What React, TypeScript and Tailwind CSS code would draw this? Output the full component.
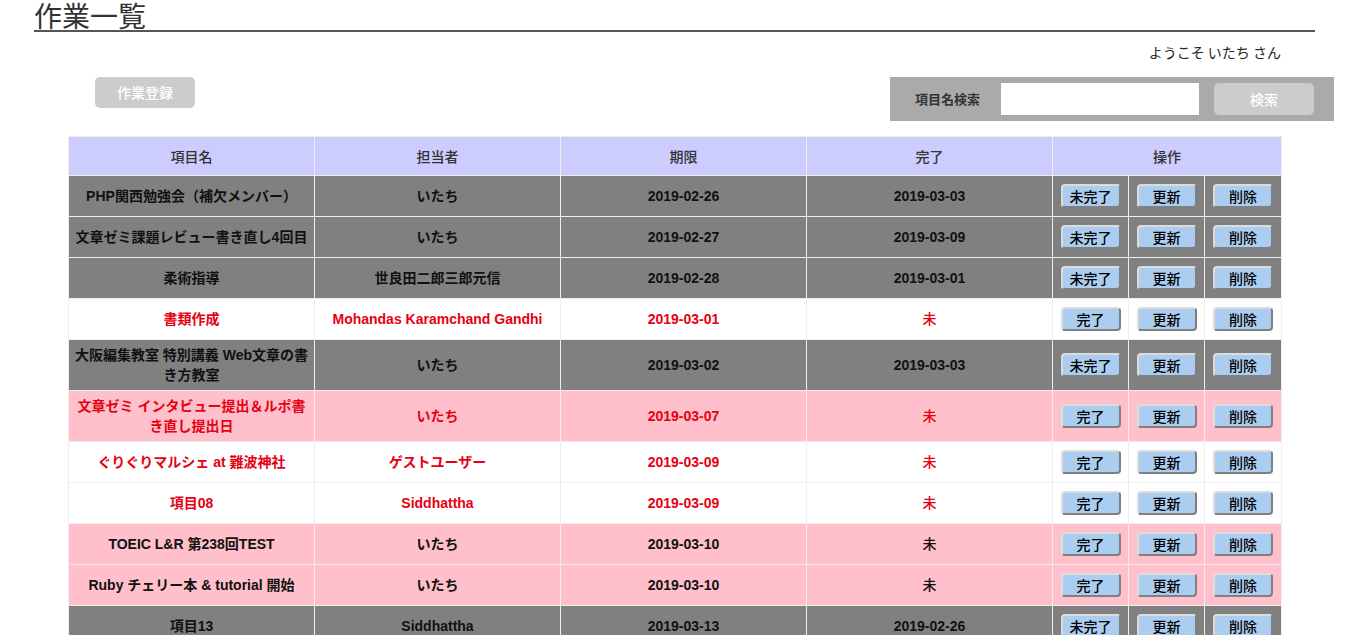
type Row = {
  name: string;
  owner: string;
  due: string;
  done: string;
  kind: "gray" | "white" | "pink";
  red: boolean;
};

const rows: Row[] = [
  { name: "PHP関西勉強会（補欠メンバー）", owner: "いたち", due: "2019-02-26", done: "2019-03-03", kind: "gray", red: false },
  { name: "文章ゼミ課題レビュー書き直し4回目", owner: "いたち", due: "2019-02-27", done: "2019-03-09", kind: "gray", red: false },
  { name: "柔術指導", owner: "世良田二郎三郎元信", due: "2019-02-28", done: "2019-03-01", kind: "gray", red: false },
  { name: "書類作成", owner: "Mohandas Karamchand Gandhi", due: "2019-03-01", done: "未", kind: "white", red: true },
  { name: "大阪編集教室 特別講義 Web文章の書き方教室", owner: "いたち", due: "2019-03-02", done: "2019-03-03", kind: "gray", red: false },
  { name: "文章ゼミ インタビュー提出＆ルポ書き直し提出日", owner: "いたち", due: "2019-03-07", done: "未", kind: "pink", red: true },
  { name: "ぐりぐりマルシェ at 難波神社", owner: "ゲストユーザー", due: "2019-03-09", done: "未", kind: "white", red: true },
  { name: "項目08", owner: "Siddhattha", due: "2019-03-09", done: "未", kind: "white", red: true },
  { name: "TOEIC L&R 第238回TEST", owner: "いたち", due: "2019-03-10", done: "未", kind: "pink", red: false },
  { name: "Ruby チェリー本 & tutorial 開始", owner: "いたち", due: "2019-03-10", done: "未", kind: "pink", red: false },
  { name: "項目13", owner: "Siddhattha", due: "2019-03-13", done: "2019-02-26", kind: "gray", red: false },
  { name: "項目14", owner: "いたち", due: "2019-03-15", done: "未", kind: "white", red: false },
  { name: "項目15", owner: "ゲストユーザー", due: "2019-03-20", done: "未", kind: "white", red: false },
];

const rowBg = {
  gray: "bg-[#808080]",
  white: "bg-white",
  pink: "bg-[#ffc0cb]",
};

function OpButton({ label }: { label: string }) {
  return (
    <button className="w-[60px] h-[24px] rounded-[4px] border-2 border-t-[#dcdcdc] border-l-[#dcdcdc] border-r-[#808080] border-b-[#808080] bg-[#abcdef] text-[14px] leading-[18px] text-black font-medium font-['Noto_Sans_CJK_JP',sans-serif]">
      {label}
    </button>
  );
}

export default function App() {
  const font = "font-['Liberation_Sans','Noto_Sans_CJK_JP',sans-serif]";
  return (
    <div className="h-[635px] overflow-y-scroll [&::-webkit-scrollbar]:w-[17px] [&::-webkit-scrollbar-track]:bg-[#f1f1f1] [&::-webkit-scrollbar-thumb]:bg-[#c1c1c1] [&::-webkit-scrollbar-thumb]:border-x-2 [&::-webkit-scrollbar-thumb]:border-[#f1f1f1] [&::-webkit-scrollbar-button]:h-[17px] [&::-webkit-scrollbar-button]:bg-[#f1f1f1]">
      <div className={`min-h-[1360px] bg-white text-[#222] ${font}`}>
        <div className="mx-[34px] w-[1281px] border-b-2 border-[#555]">
          <h1 className="pt-[1px] text-[28px] leading-[29px] font-normal text-[#333] font-['Noto_Sans_CJK_JP',sans-serif]">
            作業一覧
          </h1>
        </div>

        <div className="w-[1281px] pt-[10px] text-right text-[14px] leading-[20px] text-[#222] font-['Noto_Sans_CJK_JP',sans-serif]">
          ようこそ いたち さん
        </div>

        <div className="mt-[15px] flex items-start">
          <button className="ml-[95px] w-[100px] h-[31px] rounded-[5px] bg-[#cccccc] text-white text-[14px] font-medium font-['Noto_Sans_CJK_JP',sans-serif]">
            作業登録
          </button>
          <div className="ml-[695px] flex h-[44px] w-[444px] items-center bg-[#aaaaaa] pl-[25px] pr-[20px]">
            <span className="w-[70px] text-[13px] font-bold text-[#333] font-['Noto_Sans_CJK_JP',sans-serif]">
              項目名検索
            </span>
            <input className="ml-[16px] h-[32px] w-[198px] bg-white outline-none px-1" />
            <button className="ml-[15px] h-[32px] w-[100px] rounded-[5px] bg-[#cccccc] text-white text-[14px] font-medium font-['Noto_Sans_CJK_JP',sans-serif]">
              検索
            </button>
          </div>
        </div>

        <table className="ml-[68px] mt-[15px] w-[1213px] table-fixed border-collapse text-[14px]">
          <colgroup>
            <col className="w-[246px]" />
            <col className="w-[246px]" />
            <col className="w-[246px]" />
            <col className="w-[246px]" />
            <col className="w-[76px]" />
            <col className="w-[76px]" />
            <col className="w-[77px]" />
          </colgroup>
          <thead>
            <tr className="bg-[#ccccff]">
              {["項目名", "担当者", "期限", "完了"].map((h) => (
                <th key={h} className="h-[39px] border border-[#eeeeee] font-medium text-[14px] text-[#333] font-['Noto_Sans_CJK_JP',sans-serif]">
                  {h}
                </th>
              ))}
              <th colSpan={3} className="h-[39px] border border-[#eeeeee] font-medium text-[14px] text-[#333] font-['Noto_Sans_CJK_JP',sans-serif]">
                操作
              </th>
            </tr>
          </thead>
          <tbody>
            {rows.map((r, i) => {
              const color = r.red ? "text-[#e60012]" : "text-[#111]";
              const cell = `h-[41px] border border-[#eeeeee] px-[4px] py-[5px] text-center leading-[20px] ${color}`;
              return (
                <tr key={i} className={rowBg[r.kind]}>
                  <td className={`${cell} font-bold`}>{r.name}</td>
                  <td className={`${cell} font-bold`}>{r.owner}</td>
                  <td className={`${cell} font-bold`}>{r.due}</td>
                  <td className={`${cell} ${r.done === "未" ? "font-medium" : "font-bold"}`}>{r.done}</td>
                  <td className="border border-[#eeeeee] text-center">
                    <OpButton label={r.done === "未" ? "完了" : "未完了"} />
                  </td>
                  <td className="border border-[#eeeeee] text-center">
                    <OpButton label="更新" />
                  </td>
                  <td className="border border-[#eeeeee] text-center">
                    <OpButton label="削除" />
                  </td>
                </tr>
              );
            })}
          </tbody>
        </table>
      </div>
    </div>
  );
}
